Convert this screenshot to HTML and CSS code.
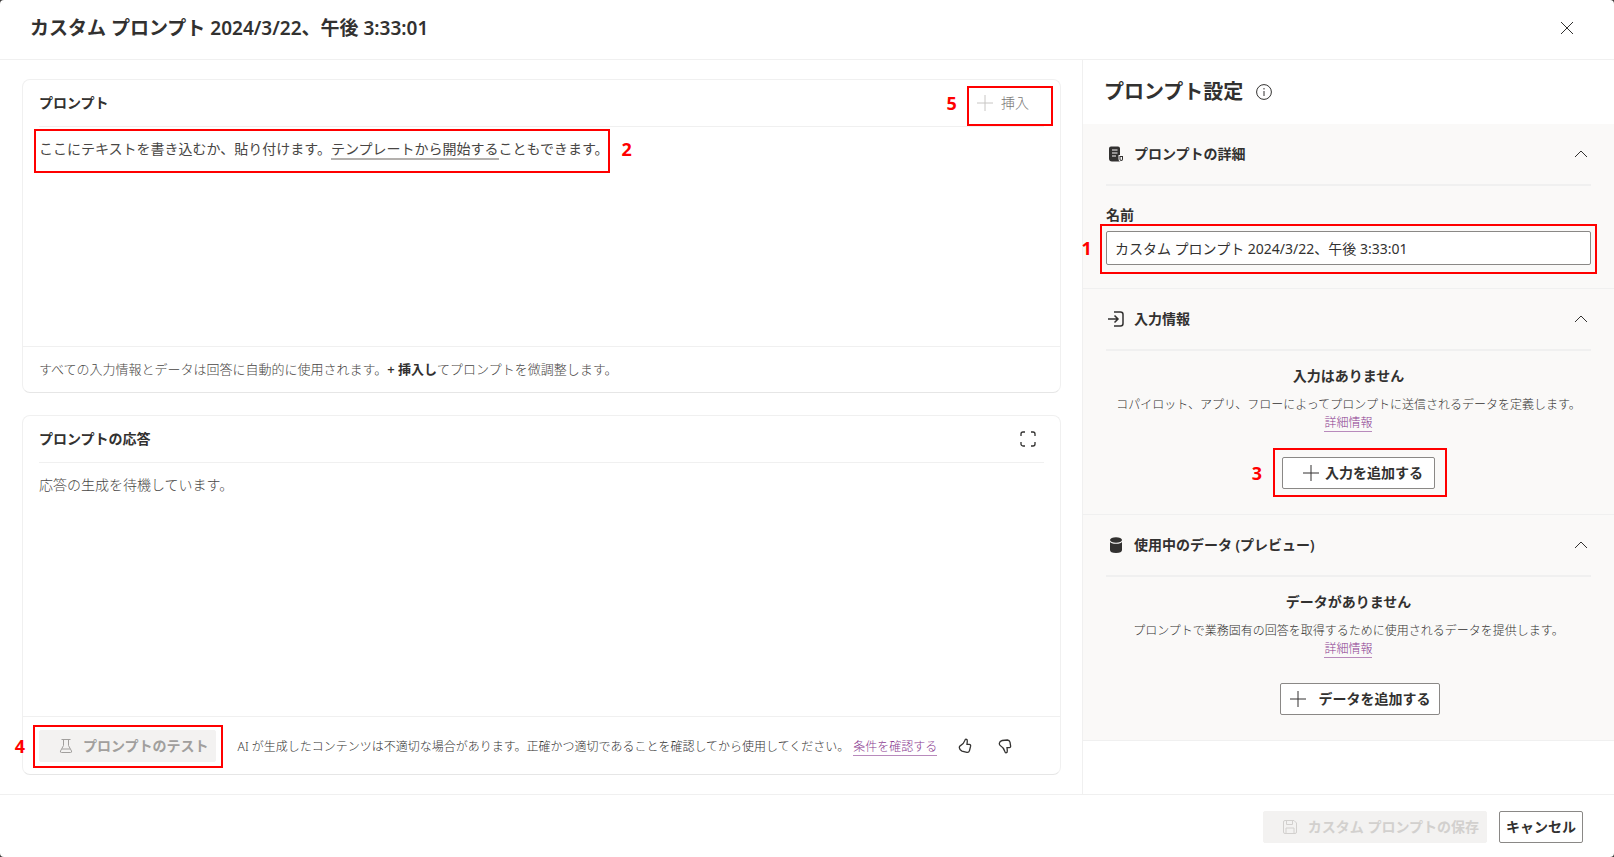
FILE: index.html
```html
<!DOCTYPE html>
<html lang="ja">
<head>
<meta charset="utf-8">
<meta name="viewport" content="width=device-width, initial-scale=1">
<title>カスタム プロンプト</title>
<link rel="stylesheet" href="styles.css">
</head>
<body>
<div class="dialog">
  <header class="dialog-header">
    <h1 class="dialog-title">カスタム プロンプト 2024/3/22、午後 3:33:01</h1>
    <button class="icon-button" type="button" aria-label="閉じる">
      <svg class="icon" viewBox="0 0 16 16"><path d="M2 2l12 12M14 2L2 14"/></svg>
    </button>
  </header>

  <div class="dialog-body">
    <main class="workspace">
      <section class="card">
        <div class="card-head">
          <h2 class="card-title">プロンプト</h2>
          <div class="marked mark-insert">
            <button class="insert-button" type="button">
              <svg class="icon faint" viewBox="0 0 16 16"><path d="M8 0v16M0 8h16"/></svg>
              挿入
            </button>
            <span class="step step-insert">5</span>
          </div>
        </div>
        <div class="card-content">
          <p class="editor-text marked mark-editor">ここにテキストを書き込むか、貼り付けます。<a class="template-link" href="#">テンプレートから開始する</a>こともできます。<span class="step step-editor">2</span></p>
        </div>
        <div class="card-foot hint">すべての入力情報とデータは回答に自動的に使用されます。<b>+ 挿入し</b>てプロンプトを微調整します。</div>
      </section>

      <section class="card">
        <div class="card-head">
          <h2 class="card-title">プロンプトの応答</h2>
          <button class="icon-button expand" type="button" aria-label="全画面表示">
            <svg class="icon heavy" viewBox="0 0 16 16"><path d="M1 5V3a2 2 0 0 1 2-2h2M11 1h2a2 2 0 0 1 2 2v2M15 11v2a2 2 0 0 1-2 2h-2M5 15H3a2 2 0 0 1-2-2v-2"/></svg>
          </button>
        </div>
        <div class="card-content">
          <p class="waiting">応答の生成を待機しています。</p>
        </div>
        <div class="card-foot actions">
          <div class="marked mark-test">
            <button class="button disabled test" type="button" disabled>
              <svg class="icon" viewBox="0 0 16 16"><path d="M3.500 1.500h9M5.500 1.500v6L2.500 13q-.6 1.500 1 1.500h9q1.600 0 1-1.500l-3-5.500v-6M4 11h8"/></svg>
              プロンプトのテスト
            </button>
            <span class="step step-test">4</span>
          </div>
          <p class="disclaimer">AI が生成したコンテンツは不適切な場合があります。正確かつ適切であることを確認してから使用してください。<a class="link" href="#">条件を確認する</a></p>
          <div class="feedback">
            <button class="icon-button" type="button" aria-label="良い">
              <svg class="icon heavy" viewBox="0 0 16 16"><path d="M9 1.200q1.500.2 1.300 2L10 6.300h2.200q1.700.2 1.400 1.900l-1.100 4.400q-.6 2-2.600 1.700L5 13.200Q2.600 12 2.300 9.600 2.200 8.300 3.500 7.600 6.600 6 7.800 2.600 8.200 1.100 9 1.200z"/></svg>
            </button>
            <button class="icon-button" type="button" aria-label="悪い">
              <svg class="icon heavy" viewBox="0 0 16 16"><path d="M9 14.800q1.500-.2 1.300-2L10 9.700h2.200q1.700-.2 1.400-1.900l-.6-3.700Q12.400 2.100 10.400 2L5.200 2.500Q2.700 3.100 2.300 5.400 2.200 7 3.500 7.700q3.100 1.600 4.300 5.700.4 1.500 1.200 1.400z"/></svg>
            </button>
          </div>
        </div>
      </section>
    </main>

    <aside class="settings">
      <div class="settings-head">
        <h2 class="settings-title">プロンプト設定</h2>
        <button class="icon-button" type="button" aria-label="情報">
          <svg class="icon" viewBox="0 0 16 16"><circle cx="8" cy="8" r="7.400"/><path d="M8 7v5M8 4v1.500"/></svg>
        </button>
      </div>

      <section class="panel">
        <div class="panel-head">
          <svg class="icon solid" viewBox="0 0 16 16"><path fill-rule="evenodd" d="M3 .5h7q2 0 2 2V9h-1.500v4q0 2.500 2 2.500H4q-3 0-3-3v-10q0-2 2-2zM4 4.500h5.500v-1H4zM4 7.500h5.500v-1H4zM4 10.500h4v-1H4z"/><path d="M11.500 10H15v3.300a1.750 1.750 0 0 1-3.500 0zm1 1v2.300a.75.75 0 0 0 1.500 0V11z" fill-rule="evenodd"/></svg>
          <h3 class="panel-title">プロンプトの詳細</h3>
          <button class="icon-button" type="button" aria-label="折りたたむ">
            <svg class="icon" viewBox="0 0 16 16"><path d="M2 11l6-6 6 6"/></svg>
          </button>
        </div>
        <div class="field">
          <label class="label" for="prompt-name">名前</label>
          <div class="marked mark-name">
            <input class="text-input" id="prompt-name" type="text" value="カスタム プロンプト 2024/3/22、午後 3:33:01">
            <span class="step step-name">1</span>
          </div>
        </div>
      </section>

      <section class="panel">
        <div class="panel-head">
          <svg class="icon bold" viewBox="0 0 16 16"><path d="M0 8h10M6.500 4.500L10 8l-3.500 3.500M6 1h6.500q2.500 0 2.500 2.500v9q0 2.500-2.500 2.500H6"/></svg>
          <h3 class="panel-title">入力情報</h3>
          <button class="icon-button" type="button" aria-label="折りたたむ">
            <svg class="icon" viewBox="0 0 16 16"><path d="M2 11l6-6 6 6"/></svg>
          </button>
        </div>
        <div class="empty">
          <h4 class="empty-title">入力はありません</h4>
          <p class="empty-text">コパイロット、アプリ、フローによってプロンプトに送信されるデータを定義します。<a class="link" href="#">詳細情報</a></p>
          <div class="marked mark-input">
            <button class="button add-input" type="button">
              <svg class="icon" viewBox="0 0 16 16"><path d="M8 0v16M0 8h16"/></svg>
              入力を追加する
            </button>
            <span class="step step-input">3</span>
          </div>
        </div>
      </section>

      <section class="panel">
        <div class="panel-head">
          <svg class="icon solid" viewBox="0 0 16 16"><ellipse cx="8" cy="3" rx="6" ry="2.800"/><path d="M2 4.800q1 2 6 2t6-2V13q0 3-6 3t-6-3z"/></svg>
          <h3 class="panel-title">使用中のデータ (プレビュー)</h3>
          <button class="icon-button" type="button" aria-label="折りたたむ">
            <svg class="icon" viewBox="0 0 16 16"><path d="M2 11l6-6 6 6"/></svg>
          </button>
        </div>
        <div class="empty">
          <h4 class="empty-title">データがありません</h4>
          <p class="empty-text">プロンプトで業務固有の回答を取得するために使用されるデータを提供します。<a class="link" href="#">詳細情報</a></p>
          <button class="button add-data" type="button">
            <svg class="icon" viewBox="0 0 16 16"><path d="M8 0v16M0 8h16"/></svg>
            データを追加する
          </button>
        </div>
      </section>
    </aside>
  </div>

  <footer class="dialog-footer">
    <button class="button disabled save" type="button" disabled>
      <svg class="icon" viewBox="0 0 16 16"><path d="M3 1.500h9l2.500 2.500v9q0 1.500-1.500 1.500H3q-1.500 0-1.500-1.500V3q0-1.500 1.500-1.500zM4.500 1.500v4h6v-4M4 14.500V9h8v5.500"/></svg>
      カスタム プロンプトの保存
    </button>
    <button class="button cancel" type="button">キャンセル</button>
  </footer>
</div>
</body>
</html>
```

FILE: styles.css
```css
* {
  box-sizing: border-box;
}

body {
  margin: 0;
  background: #3b3a39;
  color: #323130;
  font-family: "Noto Sans", "Noto Sans CJK JP", sans-serif;
  font-size: 14px;
  line-height: 20px;
}

h1, h2, h3, h4, p {
  margin: 0;
}

button, input {
  font: inherit;
  color: inherit;
}

.dialog {
  display: flex;
  flex-direction: column;
  min-height: 100vh;
  background: #fff;
  border-radius: 4px;
}

.dialog-header {
  display: flex;
  align-items: center;
  justify-content: space-between;
  height: 60px;
  padding: 0 39px 4px 30px;
  border-bottom: 1px solid #f0f0f0;
}

.dialog-title, .settings-title {
  font-size: 20px;
  line-height: 28px;
  font-weight: 600;
}

.dialog-title {
  font-size: 19px;
}

.icon-button {
  display: flex;
  padding: 0;
  border: 0;
  background: none;
}

.icon {
  flex: none;
  width: 16px;
  height: 16px;
  fill: none;
  stroke: currentColor;
  stroke-width: 1;
}

.icon.heavy {
  stroke-width: 1.300;
}

.icon.bold {
  stroke-width: 1.500;
}

.icon.solid {
  fill: currentColor;
  stroke: none;
}

.icon.faint {
  color: #c8c6c4;
}

.dialog-body {
  flex: 1;
  display: grid;
  grid-template-columns: minmax(0, 61fr) minmax(0, 30fr);
}

.workspace {
  display: grid;
  grid-template-rows: 314fr 360fr;
  gap: 22px;
  padding: 19px 21px 19px 22px;
}

.card {
  display: flex;
  flex-direction: column;
  border: 1px solid #f0f0f0;
  border-bottom-color: #e6e6e6;
  border-radius: 8px;
}

.card-head {
  display: flex;
  align-items: center;
  justify-content: space-between;
  height: 47px;
  margin: 0 16px;
  border-bottom: 1px solid #f0f0f0;
}

.card-title, .panel-title, .empty-title {
  font-size: 14px;
  line-height: 20px;
  font-weight: 600;
}

.insert-button {
  display: flex;
  align-items: center;
  gap: 8px;
  padding: 6px 0;
  border: 0;
  background: none;
  color: #797775;
  font-weight: 300;
}

.card-content {
  flex: 1;
  padding: 12px 16px;
}

.expand {
  margin-right: 8px;
}

.editor-text {
  width: max-content;
  max-width: 100%;
  color: #484644;
}

.template-link {
  color: inherit;
  text-decoration: none;
  border-bottom: 2px solid #b3b0ad;
}

.waiting {
  color: #484644;
  font-weight: 300;
}

.card-foot {
  display: flex;
  align-items: center;
  border-top: 1px solid #f0f0f0;
  padding: 0 16px;
}

.hint {
  display: block;
  padding: 12px 16px 13px;
  font-size: 13px;
  font-weight: 300;
  color: #484644;
}

.hint b {
  font-weight: 600;
  color: #323130;
}

.actions {
  height: 58px;
}

.disclaimer {
  margin-left: 22px;
  padding-top: 2px;
  font-size: 12px;
  font-weight: 300;
  color: #323130;
}

.disclaimer .link {
  margin-left: 4px;
}

.feedback {
  display: flex;
  gap: 24px;
  margin-left: 20px;
}

.link {
  color: #8a3a90;
  text-decoration: none;
  border-bottom: 1px solid #b88abc;
}

.settings {
  border-left: 1px solid #f0f0f0;
}

.settings-head {
  display: flex;
  align-items: center;
  gap: 13px;
  height: 64px;
  padding-left: 21px;
}

.panel {
  padding: 0 23px;
  background: #faf9f8;
  border-bottom: 1px solid #f0f0f0;
}

.panel-head {
  display: flex;
  align-items: center;
  gap: 10px;
  height: 62px;
  padding: 0 2px;
  border-bottom: 2px solid #f0f0f0;
}

.panel-title {
  flex: 1;
}

.field {
  display: grid;
  gap: 6px;
  padding: 19px 0 23px;
}

.label {
  font-weight: 600;
}

.text-input {
  display: block;
  width: 100%;
  height: 34px;
  padding: 0 8px;
  border: 1px solid #8a8886;
  border-radius: 2px;
  background: #fff;
}

.empty {
  display: flex;
  flex-direction: column;
  align-items: center;
  padding: 15px 0 25px;
}

.empty-text {
  display: flex;
  flex-direction: column;
  align-items: center;
  margin: 9px 0 25px;
  font-size: 12px;
  line-height: 19px;
  font-weight: 300;
  text-align: center;
}

.empty-text .link {
  line-height: 17px;
}

.button {
  display: flex;
  align-items: center;
  justify-content: center;
  height: 32px;
  padding: 0 8px;
  border: 1px solid #8a8886;
  border-radius: 2px;
  background: #fff;
  font-weight: 600;
}

.button.disabled {
  border-color: #f3f2f1;
  background: #f3f2f1;
  color: #a19f9d;
}

.test {
  gap: 9px;
  padding: 0 6px 0 18px;
}

.button.save {
  gap: 10px;
  padding: 0 7px 0 18px;
  color: #d2d0ce;
}

.button.cancel {
  padding: 0 6px;
}

.add-input {
  gap: 6px;
  padding: 0 11px 0 20px;
}

.add-data {
  gap: 12px;
  margin-left: 24px;
  padding: 0 9px;
}

.dialog-footer {
  display: flex;
  justify-content: flex-end;
  gap: 12px;
  padding: 16px 31px 14px;
  border-top: 1px solid #f0f0f0;
}

/* Numbered callouts drawn over the controls */
.marked {
  position: relative;
}

.marked::after {
  content: "";
  position: absolute;
  border: 2px solid #f00;
  pointer-events: none;
}

.mark-insert {
  margin-right: 15px;
}

.mark-insert::after {
  inset: -1px -24px -7px -10px;
}

.mark-editor::after {
  inset: -10px -1px -14px -5px;
}

.mark-name::after {
  inset: -7px -6px -9px;
}

.mark-test::after {
  inset: -5px -7px -6px -6px;
}

.mark-input {
  margin-left: 20px;
}

.mark-input::after {
  inset: -9px -12px -8px -9px;
}

.step {
  position: absolute;
  top: 50%;
  margin-top: -10px;
  color: #f00;
  font-size: 18px;
  line-height: 20px;
  font-weight: 700;
}

.step-insert, .step-input {
  right: 100%;
  margin-right: 20px;
}

.step-editor {
  left: 100%;
  margin-left: 13px;
}

.step-name, .step-test {
  right: 100%;
  margin-right: 14px;
}
```
